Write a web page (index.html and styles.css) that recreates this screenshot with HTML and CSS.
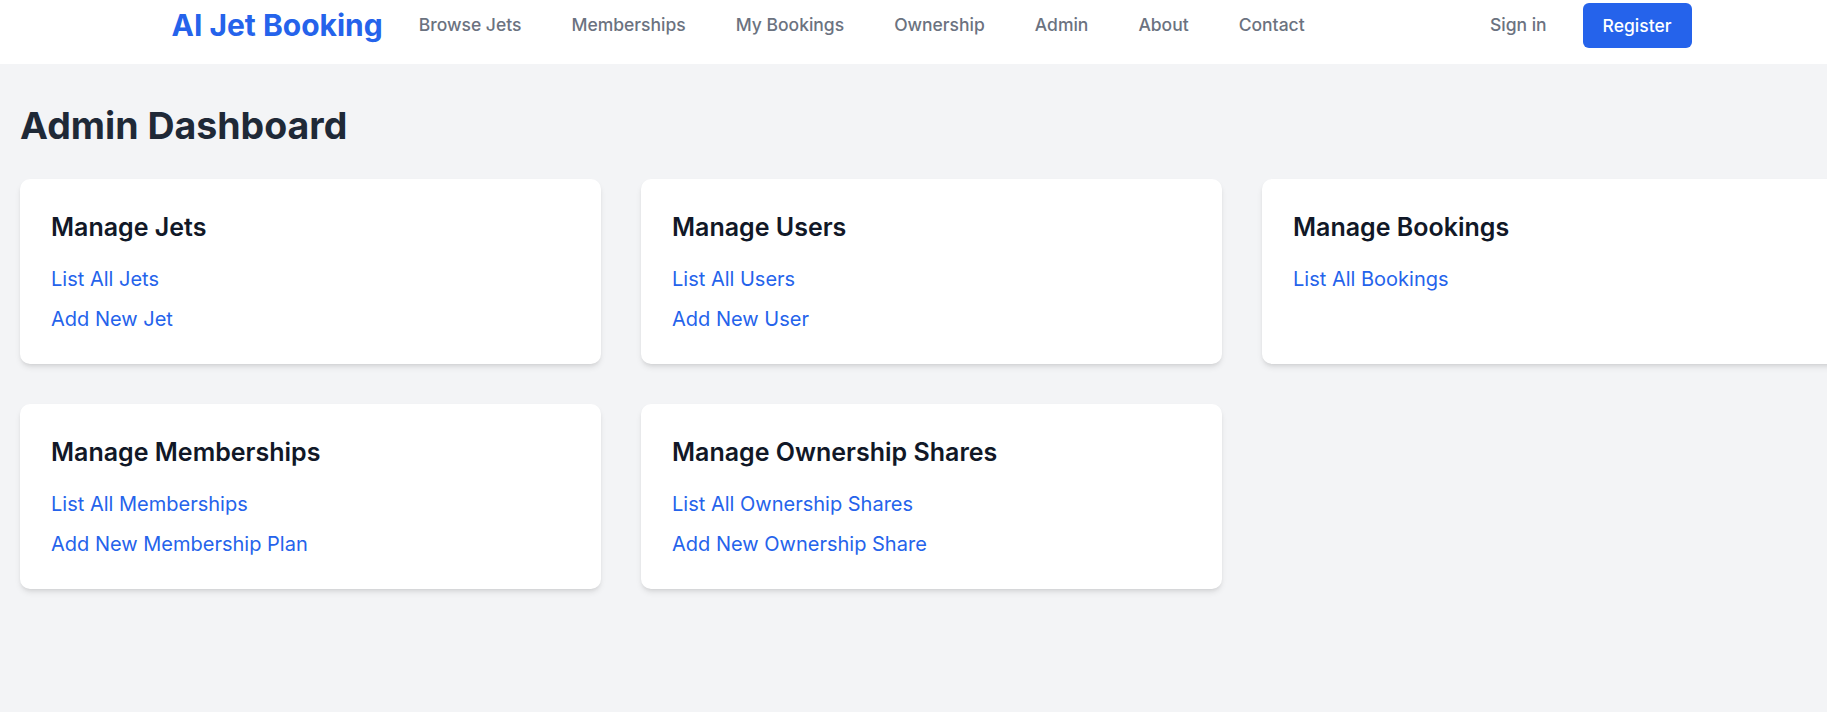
FILE: index.html
```html
<!DOCTYPE html>
<html lang="en">
<head>
<meta charset="utf-8">
<title>AI Jet Booking - Admin Dashboard</title>
<link rel="stylesheet" href="styles.css">
</head>
<body>
<div class="page">
  <header class="nav">
    <div class="nav-inner">
      <div class="nav-left">
        <a class="logo" href="#">AI Jet Booking</a>
        <nav class="links">
          <a href="#">Browse Jets</a>
          <a href="#">Memberships</a>
          <a href="#">My Bookings</a>
          <a href="#">Ownership</a>
          <a href="#">Admin</a>
          <a href="#">About</a>
          <a href="#">Contact</a>
        </nav>
      </div>
      <div class="nav-right">
        <a class="signin" href="#">Sign in</a>
        <a class="register" href="#">Register</a>
      </div>
    </div>
  </header>
  <main class="main">
    <h1 class="title">Admin Dashboard</h1>
    <div class="grid">
      <section class="card">
        <h2>Manage Jets</h2>
        <ul>
          <li><a href="#">List All Jets</a></li>
          <li><a href="#">Add New Jet</a></li>
        </ul>
      </section>
      <section class="card">
        <h2>Manage Users</h2>
        <ul>
          <li><a href="#">List All Users</a></li>
          <li><a href="#">Add New User</a></li>
        </ul>
      </section>
      <section class="card">
        <h2>Manage Bookings</h2>
        <ul>
          <li><a href="#">List All Bookings</a></li>
        </ul>
      </section>
      <section class="card">
        <h2>Manage Memberships</h2>
        <ul>
          <li><a href="#">List All Memberships</a></li>
          <li><a href="#">Add New Membership Plan</a></li>
        </ul>
      </section>
      <section class="card">
        <h2>Manage Ownership Shares</h2>
        <ul>
          <li><a href="#">List All Ownership Shares</a></li>
          <li><a href="#">Add New Ownership Share</a></li>
        </ul>
      </section>
    </div>
  </main>
</div>
</body>
</html>
```
FILE: styles.css
```css
* { box-sizing: border-box; }
html, body {
  margin: 0;
  padding: 0;
  overflow: hidden;
}
body {
  font-family: Inter, "Noto Sans", "Liberation Sans", sans-serif;
  background: #f3f4f6;
  color: #111827;
  height: 712px;
}
a { text-decoration: none; }
.page {
  width: 1863px;
  min-height: 712px;
  background: #f3f4f6;
}
.nav {
  background: #ffffff;
  height: 64px;
}
.nav-inner {
  max-width: 1536px;
  margin: 0 auto;
  padding: 0 8px;
  height: 50px;
  display: flex;
  align-items: center;
  justify-content: space-between;
}
.nav-left {
  display: flex;
  align-items: center;
  gap: 36px;
}
.logo {
  color: #2563eb;
  font-weight: 700;
  font-size: 30px;
  line-height: 36px;
}
.links {
  display: flex;
  gap: 50px;
}
.links a, .signin {
  color: #6b7280;
  font-size: 17.5px;
  font-weight: 500;
  line-height: 26px;
}
.nav-right {
  display: flex;
  align-items: center;
  gap: 36px;
}
.register {
  background: #2563eb;
  color: #ffffff;
  font-size: 17.5px;
  font-weight: 500;
  height: 45px;
  padding: 0 20px;
  border-radius: 6px;
  display: flex;
  align-items: center;
}
.main {
  padding: 41px 20px 20px;
}
.title {
  margin: 0 0 32px;
  font-size: 37.5px;
  line-height: 42px;
  font-weight: 700;
  color: #1f2937;
}
.grid {
  display: grid;
  grid-template-columns: repeat(3, 1fr);
  gap: 40px;
}
.card {
  background: #ffffff;
  border-radius: 10px;
  box-shadow: 0 4px 6px -1px rgba(0,0,0,0.1), 0 2px 4px -2px rgba(0,0,0,0.1);
  padding: 32px 31px 31px;
}
.card h2 {
  margin: 0 0 22px;
  font-size: 25px;
  line-height: 32px;
  font-weight: 600;
  color: #111827;
}
.card ul {
  list-style: none;
  margin: 0;
  padding: 0;
  display: flex;
  flex-direction: column;
  gap: 12px;
}
.card li a {
  color: #2563eb;
  font-size: 20px;
  line-height: 28px;
}
```
